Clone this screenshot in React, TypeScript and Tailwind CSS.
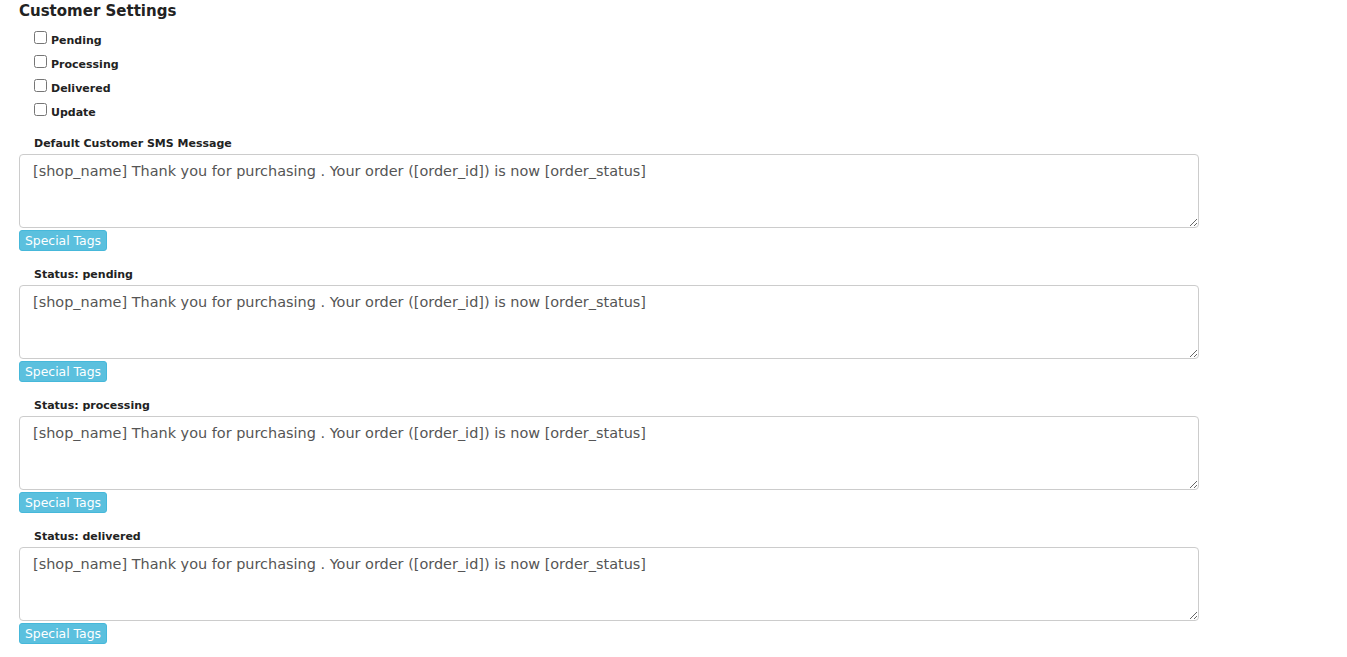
const msg = "[shop_name] Thank you for purchasing . Your order ([order_id]) is now [order_status]";

const statuses = ["Pending", "Processing", "Delivered", "Update"];
const blocks = ["Default Customer SMS Message", "Status: pending", "Status: processing", "Status: delivered"];

function MessageBlock({ label }: { label: string }) {
  return (
    <div className="flex flex-col">
      <label className="pl-[15px] text-[11px] font-bold leading-[15px] text-[#222]">{label}</label>
      <textarea
        defaultValue={msg}
        className="mt-[3px] h-[74px] w-[1180px] rounded-[4px] border border-[#ccc] px-[13px] pt-[6px] text-[14.45px] leading-[20px] text-[#555] outline-none"
      />
      <div>
        <button className="mt-[2px] rounded-[3px] border border-[#46b8da] bg-[#5bc0de] px-[5px] text-[12.4px] leading-[19px] text-white">
          Special Tags
        </button>
      </div>
    </div>
  );
}

export default function App() {
  return (
    <div className="min-h-screen bg-white px-[19px] font-['DejaVu_Sans',Verdana,sans-serif]">
      <h2 className="pt-[2px] text-[15px] font-bold leading-[18px] text-[#222]">Customer Settings</h2>
      <div className="mt-[11px] flex flex-col gap-[6px] pl-[15px]">
        {statuses.map((s) => (
          <label key={s} className="flex h-[18px] items-start gap-[4px] text-[11px] font-bold text-[#222]">
            <input type="checkbox" className="m-0 h-[13px] w-[13px]" />
            <span className="mt-[2px] leading-[15px]">{s}</span>
          </label>
        ))}
      </div>
      <div className="mt-[15px] flex flex-col gap-[15px]">
        {blocks.map((b) => (
          <MessageBlock key={b} label={b} />
        ))}
      </div>
    </div>
  );
}
